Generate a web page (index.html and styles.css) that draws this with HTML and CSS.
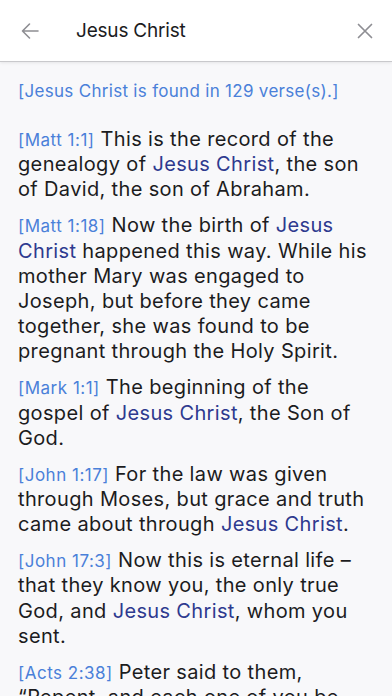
FILE: index.html
```html
<!DOCTYPE html>
<html lang="en">

<head>
    <meta charset="UTF-8">
    <meta name="viewport" content="width=device-width, initial-scale=1.0">
    <title>Search</title>
    <link rel="stylesheet" href="styles.css">
</head>

<body>
    <!-- Search bar -->
    <header class="search-bar">
        <button class="icon-btn back-btn" aria-label="Back">
            <svg width="20" height="20" viewBox="0 0 20 20">
                <path d="M18 10H2.5M9.5 3L2.5 10L9.5 17" fill="none" stroke="#8e8e93" stroke-width="1.6" stroke-linecap="round" stroke-linejoin="round"/>
            </svg>
        </button>
        <div class="search-text">Jesus Christ</div>
        <button class="icon-btn clear-btn" aria-label="Clear">
            <svg width="16" height="16" viewBox="0 0 16 16">
                <path d="M1.5 1.5L14.5 14.5M14.5 1.5L1.5 14.5" fill="none" stroke="#8e8e93" stroke-width="1.7" stroke-linecap="round"/>
            </svg>
        </button>
    </header>

    <!-- Search results -->
    <main class="results">
        <p class="summary">[Jesus Christ is found in 129 verse(s).]</p>

        <p class="verse"><span class="ref">[Matt 1:1]</span> This is the record of the genealogy of <span class="hl">Jesus Christ</span>, the son of David, the son of Abraham.</p>
        <p class="verse"><span class="ref">[Matt 1:18]</span> Now the birth of <span class="hl">Jesus Christ</span> happened this way. While his mother Mary was engaged to Joseph, but before they came together, she was found to be pregnant through the Holy Spirit.</p>
        <p class="verse"><span class="ref">[Mark 1:1]</span> The beginning of the gospel of <span class="hl">Jesus Christ</span>, the Son of God.</p>
        <p class="verse"><span class="ref">[John 1:17]</span> For the law was given through Moses, but grace and truth came about through <span class="hl">Jesus Christ</span>.</p>
        <p class="verse"><span class="ref">[John 17:3]</span> Now this is eternal life – that they know you, the only true God, and <span class="hl">Jesus Christ</span>, whom you sent.</p>
        <p class="verse"><span class="ref">[Acts 2:38]</span> Peter said to them, “Repent, and each one of you be baptized in the name of <span class="hl">Jesus Christ</span> for the forgiveness of your sins.</p>
    </main>
</body>

</html>
```

FILE: styles.css
```css
/* Umum */

body {
    font-family: Inter, 'Noto Sans', sans-serif;
    margin: 0;
    padding: 0;
    background-color: #f8f8fa;
    height: 100vh;
    overflow: hidden;
}

/* Search bar */

.search-bar {
    display: flex;
    align-items: center;
    height: 61px;
    background-color: #fff;
    border-bottom: 1px solid #c9c9cc;
    box-shadow: 0 1px 3px rgba(0, 0, 0, 0.08);
}

.icon-btn {
    background: none;
    border: none;
    padding: 0;
    display: flex;
    align-items: center;
    justify-content: center;
}

.back-btn {
    width: 20px;
    margin-left: 20px;
    margin-right: 36px;
}

.search-text {
    flex: 1;
    font-size: 19px;
    letter-spacing: -0.2px;
    color: #1c1c1e;
}

.clear-btn {
    width: 16px;
    margin-right: 19px;
}

/* Results */

.results {
    padding: 0 18px;
}

.summary {
    margin: 18px 0 25px;
    font-size: 17px;
    letter-spacing: 0.3px;
    color: #4a80d9;
    line-height: 22px;
}

.verse {
    margin: 0 0 10.8px;
    font-size: 20px;
    letter-spacing: 0.35px;
    line-height: 25.2px;
    color: #1c1c1e;
}

.ref {
    font-size: 17px;
    line-height: 1;
    letter-spacing: 0.5px;
    color: #4a80d9;
}

.hl {
    color: #2e3a8f;
}
```
